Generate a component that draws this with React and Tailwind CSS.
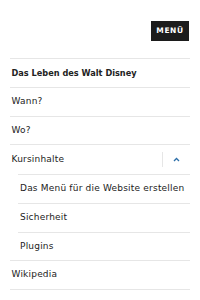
import React from 'react';

const font = { fontFamily: '"DejaVu Sans", "Liberation Sans", sans-serif' };

const Row = ({ children, bold, sub }) => (
  <div
    className={`flex items-center h-[28.75px] text-[#222] ${
      bold ? 'font-bold text-[8.2px]' : 'text-[9px] tracking-[0.2px]'
    } ${sub ? 'border-t border-[#e6e6e6] pl-[2px]' : 'border-b border-[#e6e6e6] pl-[1.5px]'}`}
  >
    {children}
  </div>
);

const App = () => {
  const subItems = ['Das Menü für die Website erstellen', 'Sicherheit', 'Plugins'];

  return (
    <div className="w-[200px] h-[300px] bg-white overflow-hidden" style={font}>
      <div className="flex justify-end pt-[21px] pr-[11px]">
        <button className="w-[38px] h-[20px] bg-[#1c1c1c] text-white text-[7.5px] font-bold tracking-[0.6px] flex items-center justify-center">
          MENÜ
        </button>
      </div>
      <nav className="mt-[17px] mx-[10px] border-t border-[#e6e6e6]">
        <Row bold>Das Leben des Walt Disney</Row>
        <Row>Wann?</Row>
        <Row>Wo?</Row>
        <div className="border-b border-[#e6e6e6]">
          <div className="flex items-center h-[28.75px] text-[9px] tracking-[0.2px] text-[#222] pl-[1.5px]">
            <span className="flex-1">Kursinhalte</span>
            <div className="h-[15px] w-px bg-[#e6e6e6]" />
            <div className="w-[27px] flex items-center justify-center">
              <svg width="7" height="5" viewBox="0 0 7 5" fill="none">
                <path d="M1 4 L3.5 1.5 L6 4" stroke="#2b6ea8" strokeWidth="1.3" />
              </svg>
            </div>
          </div>
          <div className="ml-[8px]">
            {subItems.map(item => (
              <Row key={item} sub>{item}</Row>
            ))}
          </div>
        </div>
        <Row>Wikipedia</Row>
      </nav>
    </div>
  );
};

export default App;
